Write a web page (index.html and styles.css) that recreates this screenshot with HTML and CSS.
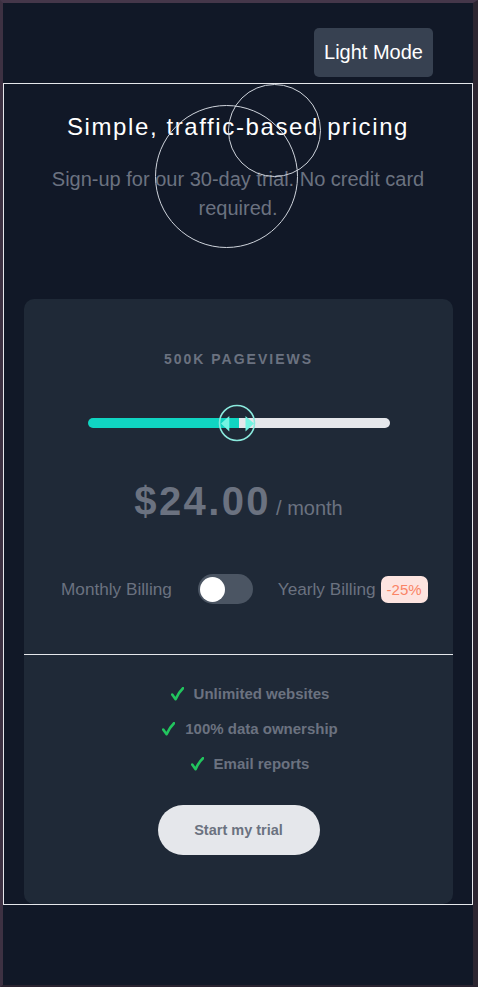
FILE: index.html
```html
<!DOCTYPE html>
<html lang="en">
<head>
<meta charset="utf-8">
<title>Pricing</title>
<link rel="stylesheet" href="styles.css">
</head>
<body>
<header class="topbar">
  <button class="mode-btn">Light Mode</button>
</header>
<section class="pricing">
  <div class="circle circle-big"></div>
  <div class="circle circle-small"></div>
  <h1 class="title">Simple, traffic-based pricing</h1>
  <p class="subtitle">Sign-up for our 30-day trial. No credit card required.</p>
  <div class="card">
    <div class="card-top">
      <div class="views">500K PAGEVIEWS</div>
      <div class="slider">
        <div class="track" style="--pct: 50%"></div>
        <svg class="thumb" width="40" height="40" viewBox="0 0 40 40">
          <circle cx="20" cy="20" r="17.5" fill="none" stroke="#8ae9dd" stroke-width="1.6"/>
          <polygon points="4,20.5 12.3,13 12.3,28.5" fill="#74f4e2"/>
          <polygon points="37,20.5 28.5,13 28.5,28.5" fill="#74f4e2"/>
        </svg>
      </div>
      <div class="price"><span class="amount">$24.00</span><span class="per">/ month</span></div>
      <div class="billing">
        <span class="bill-label">Monthly Billing</span>
        <span class="toggle"><span class="knob"></span></span>
        <span class="bill-label">Yearly Billing</span>
        <span class="badge">-25%</span>
      </div>
    </div>
    <div class="card-bottom">
      <ul class="features">
        <li><svg class="check" width="13" height="14" viewBox="0 0 13 14"><path d="M1.2 7.6 L4.6 12.2 C6.4 8 8.6 4.4 12 1.2" fill="none" stroke="#22c55e" stroke-width="2.6" stroke-linecap="round" stroke-linejoin="round"/></svg>Unlimited websites</li>
        <li><svg class="check" width="13" height="14" viewBox="0 0 13 14"><path d="M1.2 7.6 L4.6 12.2 C6.4 8 8.6 4.4 12 1.2" fill="none" stroke="#22c55e" stroke-width="2.6" stroke-linecap="round" stroke-linejoin="round"/></svg>100% data ownership</li>
        <li><svg class="check" width="13" height="14" viewBox="0 0 13 14"><path d="M1.2 7.6 L4.6 12.2 C6.4 8 8.6 4.4 12 1.2" fill="none" stroke="#22c55e" stroke-width="2.6" stroke-linecap="round" stroke-linejoin="round"/></svg>Email reports</li>
      </ul>
      <button class="trial-btn">Start my trial</button>
    </div>
  </div>
</section>
</body>
</html>
```
FILE: styles.css
```css
* { box-sizing: border-box; }
html { background: #111827; }
body {
  margin: 0;
  min-height: 987px;
  background: #111827;
  border-style: solid;
  border-width: 3px 5px 2px 3px;
  border-color: #45374a #2d2631 #2a2330 #3d3142;
  font-family: "Liberation Sans", Arial, sans-serif;
  color: #6b7280;
}
.topbar {
  display: flex;
  justify-content: flex-end;
  padding: 25px 40px 6px 0;
}
.mode-btn {
  font-family: "Liberation Sans", Arial, sans-serif;
  font-size: 20px;
  color: #ffffff;
  background: #374151;
  border: none;
  border-radius: 5px;
  height: 49px;
  width: 119px;
  padding: 0;
}
.pricing {
  position: relative;
  border: 1px solid #e5e7eb;
  padding-top: 27px;
}
.circle {
  position: absolute;
  border: 1px solid #cfd4dc;
  border-radius: 50%;
  pointer-events: none;
}
.circle-big { left: 151px; top: 21px; width: 143px; height: 143px; }
.circle-small { left: 224px; top: 0; width: 93px; height: 93px; }
.title {
  margin: 0;
  text-align: center;
  color: #ffffff;
  font-weight: normal;
  font-size: 24px;
  line-height: 32px;
  letter-spacing: 1.6px;
}
.subtitle {
  margin: 22px auto 0;
  max-width: 400px;
  text-align: center;
  font-size: 20px;
  line-height: 29px;
  color: #6b7280;
}
.card {
  margin: 76px 19px 0 20px;
  background: #1f2937;
  border-radius: 10px;
}
.card-top {
  padding: 50px 0 50px;
}
.views {
  text-align: center;
  font-weight: bold;
  font-size: 14px;
  line-height: 20px;
  letter-spacing: 2px;
}
.slider {
  position: relative;
  width: 302px;
  height: 36px;
  margin: 36px auto 0;
  padding-top: 13px;
}
.track {
  height: 10px;
  border-radius: 5px;
  background: linear-gradient(to right, #10d5c2 var(--pct), #e5e7eb var(--pct));
}
.thumb {
  position: absolute;
  left: 129px;
  top: -2px;
}
.price {
  margin-top: 36px;
  display: flex;
  justify-content: center;
  align-items: baseline;
  gap: 5px;
  height: 48px;
}
.amount {
  font-size: 40px;
  line-height: 48px;
  font-weight: bold;
  letter-spacing: 2.4px;
}
.per {
  font-size: 20px;
  line-height: 20px;
}
.billing {
  margin-top: 49px;
  display: flex;
  align-items: center;
  height: 30px;
  padding-left: 37px;
}
.bill-label {
  font-size: 17.2px;
}
.toggle {
  position: relative;
  width: 55px;
  height: 30px;
  border-radius: 15px;
  background: #4b5563;
  margin: 0 25px 0 26px;
}
.knob {
  position: absolute;
  left: 2.5px;
  top: 2.5px;
  width: 25px;
  height: 25px;
  border-radius: 50%;
  background: #ffffff;
}
.badge {
  margin-left: 5px;
  height: 27px;
  line-height: 27px;
  padding: 0 6px;
  border-radius: 7px;
  background: #fde4e0;
  color: #fa8466;
  font-size: 15px;
}
.card-bottom {
  border-top: 1px solid #e5e7eb;
  padding: 21px 0 49px;
  display: flex;
  flex-direction: column;
  align-items: center;
}
.features {
  list-style: none;
  margin: 0;
  padding: 0 0 0 23px;
}
.features li {
  display: flex;
  justify-content: center;
  align-items: center;
  gap: 10px;
  height: 35px;
  font-weight: bold;
  font-size: 15px;
}
.trial-btn {
  margin-top: 24px;
  width: 162px;
  height: 50px;
  border: none;
  border-radius: 25px;
  background: #e5e7eb;
  color: #6b7280;
  font-family: "Liberation Sans", Arial, sans-serif;
  font-weight: bold;
  font-size: 14.5px;
}
```
